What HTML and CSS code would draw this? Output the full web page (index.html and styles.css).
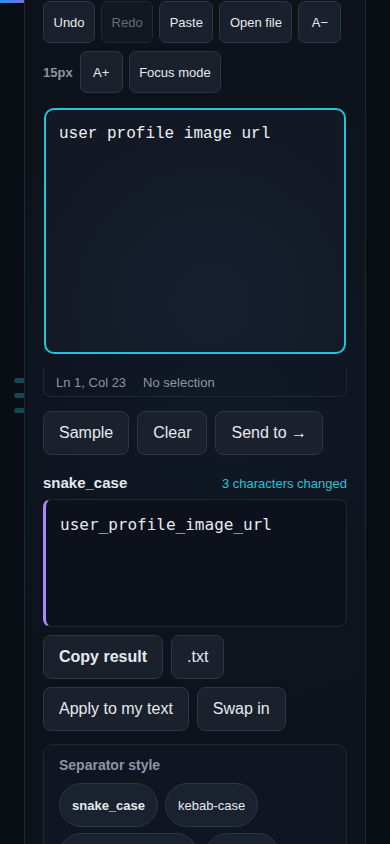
FILE: index.html
```html
<!DOCTYPE html>
<html lang="en">
<head>
  <meta charset="UTF-8" />
  <meta name="viewport" content="width=device-width, initial-scale=1.0"/>
  <title>Case Converter</title>
  <link rel="stylesheet" href="styles.css">
</head>
<body>
  <div class="shell">
    <!-- LEFT RAIL -->
    <aside class="rail">
      <div class="rail-glow"></div>
      <div class="rail-ticks">
        <span></span>
        <span></span>
        <span></span>
      </div>
    </aside>

    <!-- MAIN PANEL -->
    <main class="panel">
      <div class="toolbar">
        <button class="btn">Undo</button>
        <button class="btn" disabled>Redo</button>
        <button class="btn">Paste</button>
        <button class="btn">Open file</button>
        <button class="btn">A&minus;</button>
      </div>
      <div class="toolbar">
        <span class="size-label">15px</span>
        <button class="btn">A+</button>
        <button class="btn">Focus mode</button>
      </div>

      <!-- Input editor -->
      <textarea class="editor" spellcheck="false">user profile image url</textarea>
      <div class="status">
        <span>Ln 1, Col 23</span>
        <span>No selection</span>
      </div>

      <div class="actions">
        <button class="btn btn-lg">Sample</button>
        <button class="btn btn-lg">Clear</button>
        <button class="btn btn-lg">Send to &rarr;</button>
      </div>

      <!-- Result -->
      <div class="result-head">
        <h3>snake_case</h3>
        <span class="changed">3 characters changed</span>
      </div>
      <div class="result">user_profile_image_url</div>

      <div class="actions tight">
        <button class="btn btn-lg strong">Copy result</button>
        <button class="btn btn-lg">.txt</button>
      </div>
      <div class="actions tight">
        <button class="btn btn-lg">Apply to my text</button>
        <button class="btn btn-lg">Swap in</button>
      </div>

      <!-- Options -->
      <section class="options">
        <h4>Separator style</h4>
        <div class="chips">
          <button class="chip active">snake_case</button>
          <button class="chip">kebab-case</button>
          <button class="chip">CONSTANT_CASE</button>
          <button class="chip">dot.case</button>
        </div>
      </section>
    </main>
  </div>
</body>
</html>
```

FILE: styles.css
```css
/* ------------------------------------------------------------
   COLOR PALETTE
------------------------------------------------------------ */
:root {
  --bg: #090d14;
  --panel: #0d121b;
  --line: #1f2733;
  --btn: #1a212c;
  --btn-border: #2d3643;
  --text: #e6e9ef;
  --muted: #8c95a3;
  --cyan: #22c3dc;
  --purple: #a78bfa;
}

/* ------------------------------------------------------------
   GLOBAL & RESET
------------------------------------------------------------ */
* {
  margin: 0;
  padding: 0;
  box-sizing: border-box;
}
body {
  font-family: "Liberation Sans", Arial, sans-serif;
  background-color: var(--bg);
  color: var(--text);
  overflow: hidden;
}
button {
  font-family: inherit;
  color: inherit;
  white-space: nowrap;
}

/* ------------------------------------------------------------
   SHELL
------------------------------------------------------------ */
.shell {
  display: flex;
  min-height: 844px;
}
.rail {
  width: 24px;
  flex-shrink: 0;
  display: flex;
  flex-direction: column;
}
.rail-glow {
  height: 3px;
  width: 25px;
  background: linear-gradient(90deg, #2a8fe0, #7c6cf0);
}
.rail-ticks {
  margin-top: 375px;
  display: flex;
  flex-direction: column;
  align-items: flex-end;
  gap: 10px;
}
.rail-ticks span {
  width: 10px;
  height: 5px;
  border-radius: 3px 0 0 3px;
  background: #0f4a52;
}

/* ------------------------------------------------------------
   PANEL
------------------------------------------------------------ */
.panel {
  width: 342px;
  flex-shrink: 0;
  background: radial-gradient(circle at 60% 45%, #101926 0%, var(--panel) 60%);
  border-left: 1px solid var(--line);
  border-right: 1px solid var(--line);
  padding: 1px 18px 0 18px;
}

.toolbar {
  display: flex;
  align-items: center;
  gap: 6px;
  margin-bottom: 8px;
}
.size-label {
  font-size: 13px;
  font-weight: bold;
  color: var(--muted);
  margin-right: 1px;
}

.btn {
  background-color: var(--btn);
  border: 1px solid var(--btn-border);
  border-radius: 7px;
  font-size: 13px;
  height: 42px;
  min-width: 43px;
  padding: 0 9.5px;
  cursor: pointer;
}
.btn:disabled {
  background-color: #121821;
  color: #656d79;
  border-color: #232a35;
}
.btn-lg {
  font-size: 16px;
  height: 44px;
  padding: 0 15px;
  border-radius: 8px;
}
.btn.strong {
  font-weight: bold;
}

/* Editor */
.editor {
  display: block;
  width: 302px;
  height: 246px;
  margin: 15px 0 0 1px;
  padding: 13px 13px;
  border: 2px solid var(--cyan);
  border-radius: 10px;
  background: radial-gradient(circle at 55% 80%, #162030 0%, #121924 70%);
  color: #eef1f5;
  font-family: "Liberation Mono", "Courier New", monospace;
  font-size: 16px;
  line-height: 22px;
  resize: none;
  outline: none;
}
.status {
  display: flex;
  gap: 17px;
  margin-top: 14px;
  height: 29px;
  align-items: center;
  padding: 0 12px;
  border: 1px solid var(--line);
  border-top: none;
  border-radius: 0 0 8px 8px;
  font-size: 13px;
  color: var(--muted);
}

.actions {
  display: flex;
  gap: 8px;
  margin-top: 14px;
}
.actions.tight {
  margin-top: 8px;
}

/* Result */
.result-head {
  display: flex;
  justify-content: space-between;
  align-items: baseline;
  margin-top: 19px;
}
.result-head h3 {
  font-size: 15px;
  font-weight: bold;
}
.changed {
  font-size: 13px;
  color: var(--cyan);
}
.result {
  margin-top: 8px;
  height: 128px;
  padding: 14px 14px;
  border: 1px solid var(--line);
  border-left: 3px solid var(--purple);
  border-radius: 8px;
  background-color: #0c111c;
  font-family: "DejaVu Sans Mono", monospace;
  font-size: 16px;
  line-height: 22px;
}

/* Options */
.options {
  margin-top: 13px;
  border: 1px solid var(--line);
  border-radius: 10px;
  padding: 12px 15px 16px;
  background-color: #0f1521;
}
.options h4 {
  font-size: 14px;
  font-weight: bold;
  color: var(--muted);
  margin-bottom: 10px;
}
.chips {
  display: flex;
  flex-wrap: wrap;
  gap: 6px 7px;
}
.chip {
  background-color: #1a2230;
  border: 1px solid var(--btn-border);
  border-radius: 22px;
  height: 44px;
  padding: 0 12px;
  font-size: 13px;
  cursor: pointer;
}
.chip.active {
  font-weight: bold;
}
```
